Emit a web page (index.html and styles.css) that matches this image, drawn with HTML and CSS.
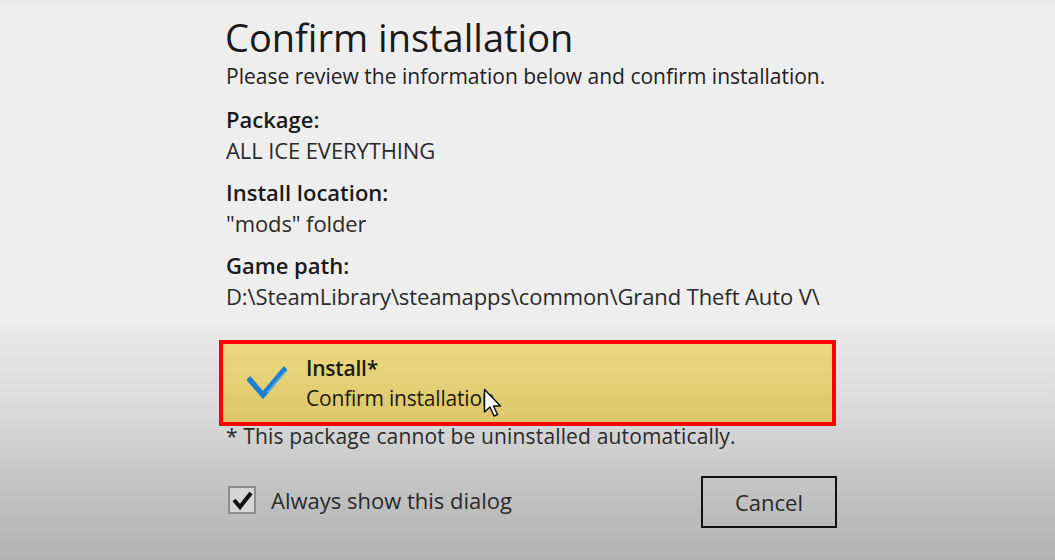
FILE: index.html
```html
<!DOCTYPE html>
<html>
<head>
<meta charset="utf-8">
<link rel="stylesheet" href="styles.css">
</head>
<body>
<div class="dialog">
  <h1 class="title">Confirm installation</h1>
  <p class="subtitle">Please review the information below and confirm installation.</p>

  <div class="field">
    <div class="label">Package:</div>
    <div class="value">ALL ICE EVERYTHING</div>
  </div>
  <div class="field">
    <div class="label">Install location:</div>
    <div class="value">"mods" folder</div>
  </div>
  <div class="field">
    <div class="label">Game path:</div>
    <div class="value">D:\SteamLibrary\steamapps\common\Grand Theft Auto V\</div>
  </div>

  <div class="install">
    <svg class="install-icon" width="40" height="36" viewBox="0 0 40 36">
      <polyline points="3,14 16,29 37,4" fill="none" stroke="#1f7fd0" stroke-width="5.5" stroke-linecap="square" stroke-linejoin="miter"/>
      <polyline points="19,25 37,4" fill="none" stroke="#5fb2ee" stroke-width="1.5" transform="translate(1.5,1.5)"/>
    </svg>
    <div class="install-text">
      <div class="install-title">Install*</div>
      <div class="install-sub">Confirm installation</div>
    </div>
    <svg class="cursor" width="21" height="30" viewBox="0 0 21 30">
      <path d="M1.5 1.5 L1.5 24 L7 19 L11 28 L14.5 26.5 L10.5 18 L17.5 18 Z" fill="#fff" stroke="#111" stroke-width="1.5" stroke-linejoin="round"/>
    </svg>
  </div>
  <p class="note">* This package cannot be uninstalled automatically.</p>

  <div class="footer">
    <label class="check">
      <span class="box">
        <svg width="24" height="24" viewBox="0 0 24 24">
          <polyline points="4,12 10,19 21,5" fill="none" stroke="#111" stroke-width="4"/>
        </svg>
      </span>
      <span class="check-label">Always show this dialog</span>
    </label>
    <button class="cancel">Cancel</button>
  </div>
</div>
</body>
</html>
```

FILE: styles.css
```css
* { box-sizing: border-box; }
html, body { margin: 0; padding: 0; }
body {
  width: 1055px;
  height: 560px;
  overflow: hidden;
  font-family: "Open Sans", "Noto Sans", sans-serif;
  color: #222;
  background: linear-gradient(to bottom,
    #e4e4e4 0px, #eeeeee 6px, #eeeeee 318px, #e6e6e6 345px,
    #dadada 410px, #cbcbcb 460px, #bdbdbd 510px, #b3b3b3 560px);
}
.dialog {
  width: 617px;
  margin: 0 auto;
  padding-top: 13px;
}
.title {
  margin: 0;
  padding-left: 6px;
  font-weight: 400;
  font-size: 38px;
  line-height: 48px;
  color: #1a1a1a;
}
.subtitle {
  margin: 0;
  padding-left: 7px;
  font-size: 21px;
  line-height: 31px;
}
.field { padding-left: 7px; margin-top: 11px; font-size: 22px; line-height: 31px; }
.field:first-of-type { margin-top: 12px; }
.label { font-weight: 600; color: #1a1a1a; }
.value { color: #2a2a2a; letter-spacing: -0.1px; }

.install {
  position: relative;
  margin-top: 28px;
  height: 86px;
  border: 4px solid #ff0000;
  background: linear-gradient(to bottom, #ebd97f, #ddc66c);
  display: flex;
  align-items: flex-start;
  padding: 9px 0 0 24px;
}
.install-icon { margin-top: 13px; flex: none; }
.install-text { margin-left: 19px; font-size: 21px; line-height: 30px; letter-spacing: -0.2px; color: #1d1a10; }
.install-title { font-weight: 600; }
.cursor { position: absolute; left: 260px; top: 44px; }

.note {
  margin: 0;
  padding-left: 7px;
  font-size: 21px;
  line-height: 20px;
  letter-spacing: 0.15px;
  color: #2a2a2a;
}
.footer {
  margin-top: 30px;
  display: flex;
  align-items: center;
  justify-content: space-between;
  padding-left: 9px;
}
.check { display: flex; align-items: center; gap: 15px; margin-top: -4px; }
.box {
  width: 28px; height: 28px;
  border: 2px solid #8c8c8c;
  background: #d6d6d6;
  display: flex; align-items: center; justify-content: center;
}
.check-label { font-size: 22px; color: #2a2a2a; }
.cancel {
  width: 136px;
  height: 52px;
  margin-right: -1px;
  border: 2px solid #111;
  background: transparent;
  font-family: inherit;
  font-size: 22px;
  color: #2a2a2a;
  padding: 0;
}
```
